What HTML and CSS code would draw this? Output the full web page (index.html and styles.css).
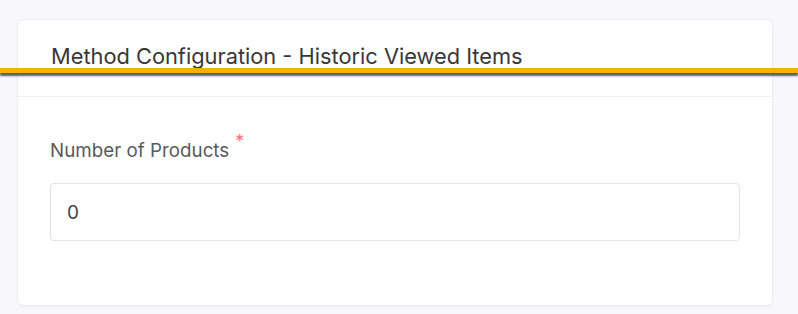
FILE: index.html
```html
<!DOCTYPE html>
<html>
<head>
	<meta charset="utf-8">
	<link rel="stylesheet" href="styles.css">
</head>
<body>
	<div class="page">
		<div class="card">
			<div class="card-header">
				<h2 class="card-title">Method Configuration - Historic Viewed Items</h2>
			</div>
			<div class="card-body">
				<label class="field-label" for="num_products">Number of Products<span class="required">*</span></label>
				<input type="text" id="num_products" class="field-input" value="0">
			</div>
		</div>
	</div>
	<div class="highlight-line"></div>
</body>
</html>
```

FILE: styles.css
```css
html, body {
	margin:0;
	padding:0;
	background:#f8f8fa;
	font-family:Inter, "Noto Sans", sans-serif;
}
.page {
	padding:19px 25px 8px 17px;
}
.card {
	width:756px;
	height:287px;
	box-sizing:border-box;
	background:#fff;
	border:1px solid #ededf0;
	border-radius:6px;
	box-shadow:0 1px 2px rgba(0, 0, 0, .04);
}
.card-header {
	height:77px;
	box-sizing:border-box;
	padding:23px 33px 0 33px;
	border-bottom:1px solid #f1f1f3;
}
.card-title {
	margin:0;
	font-size:21.8px;
	font-weight:400;
	line-height:26px;
	color:#383838;
	white-space:nowrap;
}
.card-body {
	padding:43px 32px 0 32px;
}
.field-label {
	display:block;
	font-size:18.8px;
	line-height:22px;
	color:#5a5a5a;
}
.required {
	color:#f87171;
	font-size:18px;
	position:relative;
	top:-9px;
	margin-left:6px;
}
.field-input {
	display:block;
	margin-top:21px;
	width:690px;
	height:58px;
	box-sizing:border-box;
	padding:0 16px;
	border:1px solid #e3e3e6;
	border-radius:4px;
	font-family:Inter, "Noto Sans", sans-serif;
	font-size:19px;
	color:#444;
	background:#fff;
	outline:none;
}
.highlight-line {
	position:absolute;
	left:0;
	right:0;
	top:68px;
	height:5px;
	background:#f5b300;
	box-shadow:0 3px 2px rgba(40, 40, 40, .75);
}
```
